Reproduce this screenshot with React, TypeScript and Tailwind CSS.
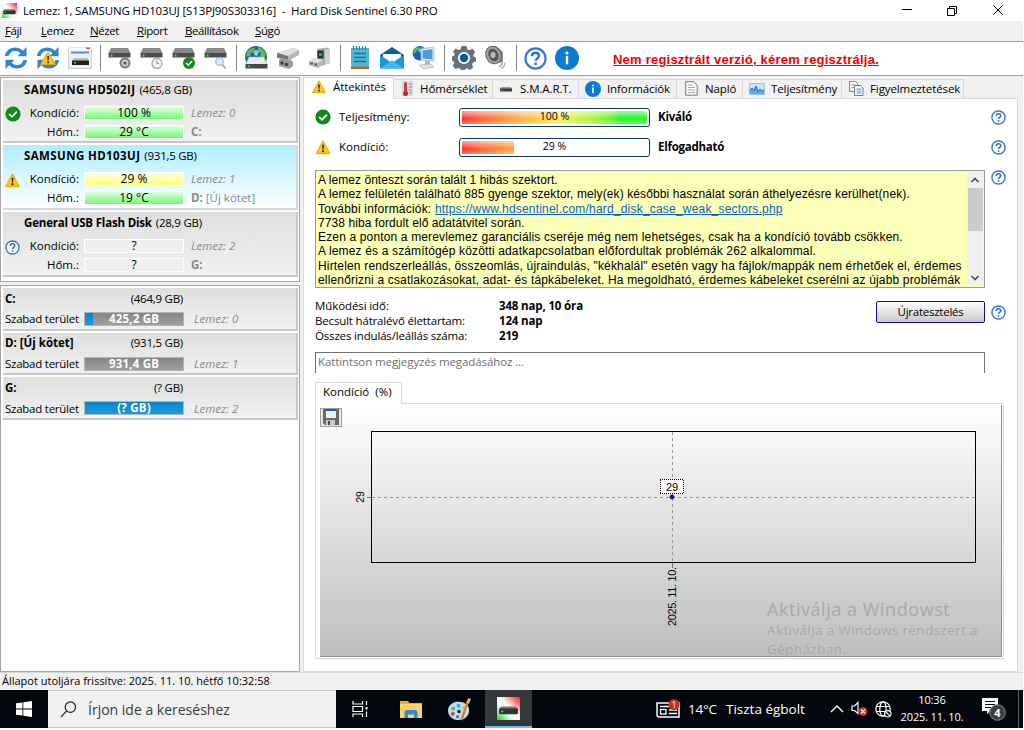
import type { ReactNode } from "react";
import { clsx } from "clsx";

type Disk = {
  name: string;
  size: string;
  status: "ok" | "warn" | "unknown";
  condition: string;
  temp: string;
  index: string;
  drive: string;
  label?: string;
  selected?: boolean;
  className: string;
  track: string;
};

const disks: Disk[] = [
  { name: "SAMSUNG HD502IJ", size: "(465,8 GB)", status: "ok", condition: "100 %", temp: "29 °C", index: "Lemez: 0", drive: "C:", className: "h-[63px] pt-px", track: "tracking-[0.4px]" },
  { name: "SAMSUNG HD103UJ", size: "(931,5 GB)", status: "warn", condition: "29 %", temp: "19 °C", index: "Lemez: 1", drive: "D:", label: "[Új kötet]", selected: true, className: "h-[65px] pt-[2px]", track: "tracking-[0.4px]" },
  { name: "General USB Flash Disk", size: "(28,9 GB)", status: "unknown", condition: "?", temp: "?", index: "Lemez: 2", drive: "G:", className: "h-[65px] pt-[2px]", track: "tracking-[-0.18px]" },
];

const volumes = [
  { name: "C:", size: "(464,9 GB)", free: "425,2 GB", used: 8, index: "Lemez: 0" },
  { name: "D: [Új kötet]", size: "(931,5 GB)", free: "931,4 GB", used: 0, index: "Lemez: 1" },
  { name: "G:", size: "(? GB)", free: "(? GB)", used: 100, index: "Lemez: 2" },
];

const messages = [
  { text: "A lemez önteszt során talált 1 hibás szektort.", track: "tracking-[0.05px]" },
  { text: "A lemez felületén található 885 gyenge szektor, mely(ek) későbbi használat során áthelyezésre kerülhet(nek).", track: "tracking-[0.1px]" },
  { text: "További információk: ", link: "https://www.hdsentinel.com/hard_disk_case_weak_sectors.php", track: "tracking-[0.2px]" },
  { text: "7738 hiba fordult elő adatátvitel során.", track: "tracking-[0.08px]" },
  { text: "Ezen a ponton a merevlemez garanciális cseréje még nem lehetséges, csak ha a kondíció tovább csökken.", track: "tracking-[0.15px]" },
  { text: "A lemez és a számítógép közötti adatkapcsolatban előfordultak problémák 262 alkalommal.", track: "tracking-[0.15px]" },
  { text: "Hirtelen rendszerleállás, összeomlás, újraindulás, \"kékhalál\" esetén vagy ha fájlok/mappák nem érhetőek el, érdemes", track: "tracking-[0.17px]" },
  { text: "ellenőrizni a csatlakozásokat, adat- és tápkábeleket. Ha megoldható, érdemes kábeleket cserélni az újabb problémák", track: "tracking-[0.17px]" },
];

function Warn({ className }: { className?: string }) {
  return (
    <svg viewBox="0 0 16 16" className={clsx("shrink-0", className)}>
      <path d="M8 1.2 15.2 14.4H.8Z" fill="#ffc91f" stroke="#f0b400" strokeWidth="1.4" strokeLinejoin="round" />
      <path d="M7 5h2l-.4 5H7.400Z" fill="#222" />
      <rect x="7" y="11" width="2" height="2" fill="#222" />
    </svg>
  );
}

function Ok({ className }: { className?: string }) {
  return (
    <svg viewBox="0 0 16 16" className={clsx("shrink-0", className)}>
      <circle cx="8" cy="8" r="7.600" fill="#10881a" />
      <path d="m4.200 8.200 2.800 2.700 4.900-5.200" fill="none" stroke="#fff" strokeWidth="1.7" />
    </svg>
  );
}

function Help({ className }: { className?: string }) {
  return (
    <svg viewBox="0 0 16 16" className={clsx("shrink-0", className)}>
      <circle cx="8" cy="8" r="7" fill="#fff" stroke="#3a78d0" strokeWidth="1.5" />
      <path d="M5.600 6.300C5.700 4.700 6.700 4 8 4s2.400.8 2.400 2.100c0 1.700-2.300 1.800-2.300 3.500" fill="none" stroke="#2f6fca" strokeWidth="1.6" />
      <rect x="7.200" y="10.800" width="1.700" height="1.700" fill="#2f6fca" />
    </svg>
  );
}

function Info({ className }: { className?: string }) {
  return (
    <svg viewBox="0 0 16 16" className={clsx("shrink-0", className)}>
      <circle cx="8" cy="8" r="8" fill="#0a7bd0" />
      <circle cx="8" cy="4.600" r="1" fill="#fff" />
      <rect x="7.200" y="6.600" width="1.600" height="5.600" fill="#fff" />
    </svg>
  );
}

function AppIcon({ className }: { className?: string }) {
  return (
    <svg viewBox="0 0 22 22" className={clsx("shrink-0", className)}>
      <defs>
        <linearGradient id="app-bg" x1="0" y1="1" x2="1" y2="0">
          <stop offset="0" stopColor="#19d02c" />
          <stop offset=".35" stopColor="#e9fbe9" />
          <stop offset=".55" stopColor="#fff" />
          <stop offset="1" stopColor="#ff1818" />
        </linearGradient>
      </defs>
      <rect width="22" height="22" fill="url(#app-bg)" />
      <path d="M4 9h14l2 2.500H2Z" fill="#777" />
      <rect x="2" y="11" width="18" height="5.500" rx="1" fill="#333" />
      <rect x="4" y="13" width="2" height="1.500" fill="#3be04a" />
    </svg>
  );
}

function RefreshShape() {
  return (
    <g fill="#2d86d3">
      <path d="M1 10C1.500 5 6 1.500 11 1.500c3.500 0 6 1.300 7.800 3.300L22.500 1v9.200h-9l3-3C15 5.800 13.300 5 11 5c-3.400 0-5.700 2-6.500 5Z" />
      <path d="M23 14c-.5 5-5 8.500-10 8.500-3.500 0-6-1.300-7.800-3.300L1.500 23v-9.200h9l-3 3C9 18.200 10.700 19 13 19c3.400 0 5.700-2 6.500-5Z" />
    </g>
  );
}

function DriveShape() {
  return (
    <g>
      <path d="M3 2h17l2.500 5H.5Z" fill="#8a8a8a" />
      <rect x=".5" y="7" width="22" height="4.500" fill="#4d4d4d" />
      <rect x="2.500" y="8.500" width="2" height="2" fill="#35e043" />
    </g>
  );
}

function GlobeShape() {
  return (
    <g>
      <circle cx="12" cy="11" r="11" fill="#1b62bd" />
      <path d="M3 6c3-4 6-4.500 8-4l-1 4-3 1-1 3-4 1ZM14 1c4 1 7 4 8 8l-3 4-3-3 1-3-3-2Z" fill="#62bd48" />
      <path d="M10 5c2-2 4-1 5 1l-2 4-3-1Z" fill="#7ccbf5" />
    </g>
  );
}

function Tool({ children }: { children: ReactNode }) {
  return (
    <button className="flex h-8 w-8 items-center justify-center">
      <svg viewBox="0 0 24 24" className="h-6 w-6">{children}</svg>
    </button>
  );
}

function Separator() {
  return (
    <div className="flex w-2 justify-center">
      <div className="h-[26px] w-px bg-[#868686]" />
    </div>
  );
}

function Toolbar() {
  return (
    <div className="flex h-[34px] items-center border-b border-[#a0a0a0] bg-white pb-px">
      <Tool><RefreshShape /></Tool>
      <Tool>
        <RefreshShape />
        <path d="m12 6 7.500 12.500h-15Z" fill="#ffc414" stroke="#e6a400" strokeLinejoin="round" />
        <path d="M11.200 10h1.800l-.4 4.500h-1Z" fill="#222" />
        <rect x="11.200" y="15.500" width="1.800" height="1.600" fill="#222" />
      </Tool>
      <Tool>
        <rect x=".5" y="2" width="23" height="20.500" fill="#eef0f2" stroke="#ccd0d4" />
        <rect x="1" y="2" width="22" height="1.500" fill="#fff" />
        <rect x="18" y="1.500" width="4" height="1.500" fill="#dd4b3d" />
        <rect x="3" y="5.500" width="18" height="2" fill="#3d9be0" />
        <path d="M6 12h13l2 3H4Z" fill="#bbb" />
        <rect x="4" y="14.500" width="17" height="4.500" fill="#222" />
        <rect x="6" y="16" width="2" height="1.500" fill="#35e043" />
      </Tool>
      <Separator />
      <Tool>
        <DriveShape />
        <circle cx="17" cy="17" r="5.500" fill="#777b80" />
        <circle cx="17" cy="17" r="3.500" fill="#c7cacf" />
        <circle cx="17" cy="17" r="1.500" fill="#555" />
      </Tool>
      <Tool>
        <DriveShape />
        <circle cx="17" cy="17.500" r="5" fill="#f5f5f5" stroke="#aaa" strokeWidth="1.300" />
        <path d="M17 14.500v3h2" fill="none" stroke="#888" />
      </Tool>
      <Tool>
        <DriveShape />
        <circle cx="17" cy="17" r="6" fill="#12891b" />
        <path d="m14 17 2.300 2.200 3.700-4" fill="none" stroke="#fff" strokeWidth="1.500" />
      </Tool>
      <Tool>
        <DriveShape />
        <path d="m17.500 17.500 4 5" stroke="#b9a98f" strokeWidth="2" />
        <circle cx="15.500" cy="15.500" r="3.800" fill="#d6ecfb" stroke="#9db9cf" strokeWidth="1.200" />
      </Tool>
      <Separator />
      <Tool>
        <GlobeShape />
        <path d="M5 11h15l3.500 7.500H1.500Z" fill="#e8e9eb" stroke="#a8abb0" strokeWidth=".6" />
        <rect x="1.500" y="18" width="22" height="4.500" fill="#45474b" />
        <rect x="4" y="19.500" width="2" height="1.500" fill="#35e043" />
      </Tool>
      <Tool>
        <path d="M1 7 17 2l6 2v5l-9 5-13-2Z" fill="#b5b5b5" />
        <path d="m1 7 16-5 6 2-11 6Z" fill="#dedede" />
        <path d="m1 7 11 3v4L1 11.500Z" fill="#777" />
        <path d="m3 14 3-2 9 2 2 2v4l-4 3-10-3Z" fill="#9a9a9a" />
        <circle cx="6" cy="17" r="1.700" fill="#3a3a3a" />
        <circle cx="10.500" cy="18.500" r="1.700" fill="#3a3a3a" />
      </Tool>
      <Tool>
        <path d="M9 3 19 1.500l3 1.500v14l-9 3-4-2Z" fill="#a9aaab" />
        <path d="M17 3.500h5V17l-5 1.500Z" fill="#d0d0d0" />
        <rect x="9.500" y="4.500" width="6" height="8" fill="#2b332d" />
        <rect x="11" y="7.500" width="3" height="2" fill="#35e043" />
        <path d="m1 15 5-3 9 2v5l-5 3-9-3Z" fill="#b9b9b9" />
        <path d="m1 15 5-3 9 2-5 3Z" fill="#e0e0e0" />
        <rect x="2.500" y="16.500" width="2.500" height="2" fill="#555" />
        <rect x="6.500" y="17.500" width="2.500" height="2" fill="#555" />
      </Tool>
      <Separator />
      <Tool>
        <rect x="3" y="2" width="18" height="20" fill="#4fb8d6" />
        <rect x="3" y="20.500" width="18" height="2.500" fill="#b4652b" />
        <path d="M5.500 0v4M8.500 0v4M11.500 0v4M14.500 0v4M17.500 0v4" stroke="#277d9b" strokeWidth="1.200" />
        <path d="M6 7.500h12M6 11.500h12M6 15.500h12" stroke="#1c7291" strokeWidth="1.500" />
      </Tool>
      <Tool>
        <path d="M0 9 12 1l12 8v13H0Z" fill="#115a9c" />
        <path d="M3 8h18v8H3Z" fill="#f6f9fb" />
        <path d="m0 9 12 8 12-8v13.500H0Z" fill="#1b96dd" />
        <path d="m0 22.500 12-8 12 8Z" fill="#42b4ef" />
      </Tool>
      <Tool>
        <g transform="scale(.66)"><GlobeShape /></g>
        <path d="m9 3 13-2v14L9 14Z" fill="#eaf0f5" stroke="#9eabb8" strokeWidth=".7" />
        <path d="m10.500 4.500 10-1.500v10.500l-10-1Z" fill="#4a9be8" />
        <path d="m13 15 5 .3v4H13Z" fill="#a8b4c2" />
        <path d="m7 19 12-1 3 3-11 2Z" fill="#dfe4e9" stroke="#9eabb8" strokeWidth=".6" />
      </Tool>
      <Separator />
      <Tool>
        <path
          fillRule="evenodd"
          d="M9.500 0h5l.8 3.300 2 .9L20.500 2.500 23 6.200l-1.700 2.700.5 1.800 2.200.8v4l-3 1-.9 1.900 1.100 3-3.200 2.500-2.800-1.700-1.500.5-.8 1.300h-3.800l-1-1.500-1.800-.6L3.500 23 .8 20l1.400-3-.7-1.700L0 14.500v-4l2-.8.7-2L1 5.500 3.600 2.500l3 1.500 2-.8ZM12 6a6 6 0 1 0 0 12 6 6 0 0 0 0-12Z"
          fill="#67727f"
        />
        <circle cx="12" cy="12" r="4.200" fill="#0b56a7" />
      </Tool>
      <Tool>
        <path d="M5 2 12 0l7 6v10l-4 1Z" fill="#8b8d8f" />
        <ellipse cx="9.500" cy="9" rx="7.500" ry="9" fill="#a3a5a7" stroke="#5e6062" transform="rotate(-25 9.500 9)" />
        <ellipse cx="9.500" cy="9" rx="5" ry="6.500" fill="#55575a" transform="rotate(-25 9.500 9)" />
        <ellipse cx="9" cy="9" rx="2.500" ry="3" fill="#b8babc" />
        <path d="M15 20.500c2-.5 3-2 3.500-4M17 22.500c2.500-1 4-3 4-6" fill="none" stroke="#a7a9cc" strokeWidth="1.300" />
      </Tool>
      <Separator />
      <button className="-ml-px flex h-8 w-8 items-center justify-center"><Help className="h-[23px] w-[23px]" /></button>
      <button className="flex h-8 w-8 items-center justify-center"><Info className="h-6 w-6" /></button>
      <a className="mt-1 ml-[30px] font-['Liberation_Sans'] text-[13px] font-bold tracking-[0.22px] whitespace-nowrap text-[#f00000] underline">
        Nem regisztrált verzió, kérem regisztrálja.
      </a>
    </div>
  );
}

function Meter({ value, tone }: { value: string; tone: "good" | "warn" | "none" }) {
  return (
    <div
      className={clsx(
        "flex h-[14px] w-[100px] items-center justify-center border border-white text-[12px] leading-none",
        tone === "good" && "bg-linear-to-b from-[#dcffdc] to-[#72f872]",
        tone === "warn" && "bg-linear-to-b from-[#ffffe0] to-[#ffff72]",
        tone === "none" && "bg-[#efefef]"
      )}
    >
      {value}
    </div>
  );
}

function DiskCard({ disk }: { disk: Disk }) {
  const known = disk.status !== "unknown";
  return (
    <div
      className={clsx(
        "flex flex-col border-r-2 border-b-2 bg-linear-to-b",
        disk.selected ? "border-[#d3dadd] from-[#aeeefe] to-white" : "border-[#c8c8c8] from-[#dedede] to-[#f1f1f1]",
        disk.className
      )}
    >
      <div className="flex h-[18px] items-center gap-1 pl-[21px] whitespace-nowrap">
        <b className={disk.track}>{disk.name}</b>
        <span className="tracking-[-0.25px]">{disk.size}</span>
      </div>
      <div className="mt-[7px] flex items-start">
        <div className="flex w-5 items-center pl-[2px]">
          {disk.status === "ok" && <Ok className="h-4 w-4" />}
          {disk.status === "warn" && <Warn className="mt-px h-[15px] w-[15px]" />}
          {disk.status === "unknown" && <Help className="mt-px h-[15px] w-[15px]" />}
        </div>
        <div className="flex flex-col gap-[5px]">
          <div className="flex h-[14px] items-center whitespace-nowrap">
            <span className="w-[56px] text-right">Kondíció:</span>
            <div className="ml-[5px]"><Meter value={disk.condition} tone={known ? (disk.status === "warn" ? "warn" : "good") : "none"} /></div>
            <i className="ml-[7px] text-[#8a8a8a]">{disk.index}</i>
          </div>
          <div className="flex h-[14px] items-center whitespace-nowrap">
            <span className="w-[56px] text-right">Hőm.:</span>
            <div className="ml-[5px]"><Meter value={disk.temp} tone={known ? "good" : "none"} /></div>
            <span className="ml-[7px] text-[#8a8a8a]"><b>{disk.drive}</b> {disk.label}</span>
          </div>
        </div>
      </div>
    </div>
  );
}

function Sidebar() {
  return (
    <div className="flex w-[300px] flex-col gap-[3px]">
      <div className="flex h-[205px] flex-col gap-[2px] border border-[#a5a5a5] bg-white pt-[2px] pr-px pl-[2px]">
        {disks.map((disk) => (
          <DiskCard key={disk.name} disk={disk} />
        ))}
      </div>
      <div className="flex flex-1 flex-col gap-[2px] border border-[#a5a5a5] bg-white pt-[2px] pr-px pl-[2px]">
        {volumes.map((volume) => (
          <div key={volume.name} className="flex h-[42.600px] flex-col border-r-2 border-b-2 border-[#c8c8c8] bg-linear-to-b from-[#dedede] to-[#f1f1f1] pl-[2px]">
            <div className="flex h-[21px] w-[178px] items-center justify-between whitespace-nowrap">
              <b>{volume.name}</b>
              <span className="tracking-[-0.25px]">{volume.size}</span>
            </div>
            <div className="mt-px flex h-[18px] items-center whitespace-nowrap">
              <span className="w-[79px] tracking-[-0.25px]">Szabad terület</span>
              <div className="relative flex h-[14px] w-[100px] items-center justify-center border border-[#b4b4b4] bg-linear-to-b from-[#858585] to-[#a0a0a0]">
                <div className="absolute inset-y-0 left-0 bg-linear-to-b from-[#0b83c4] to-[#1e9bdc]" style={{ width: `${volume.used}%` }} />
                <b className="relative leading-none tracking-[0.2px] text-white">{volume.free}</b>
              </div>
              <i className="ml-[10px] text-[#8a8a8a]">{volume.index}</i>
            </div>
          </div>
        ))}
      </div>
    </div>
  );
}

function Tab({ icon, label, className }: { icon: ReactNode; label: string; className: string }) {
  return (
    <div className={clsx("flex h-[19px] items-center border-t border-r border-[#dadada] bg-[#f1f1f1] pb-px tracking-[-0.1px] whitespace-nowrap", className)}>
      <span className="flex w-[18px] shrink-0 items-center justify-center">{icon}</span>
      {label}
    </div>
  );
}

function Tabs() {
  return (
    <div className="flex h-[21px] items-end">
      <div className="relative z-10 -mb-px flex h-[22px] w-[91px] items-center border border-b-0 border-[#dadada] bg-white pb-[3px] pl-[8px] tracking-[-0.1px] whitespace-nowrap">
        <Warn className="h-[14px] w-[14px]" />
        <span className="ml-[7px]">Áttekintés</span>
      </div>
      <Tab
        className="w-[99px] gap-[8px]"
        label="Hőmérséklet"
        icon={
          <svg viewBox="0 0 16 16" className="ml-[8px] h-4 w-4 shrink-0">
            <rect x="3" y="0" width="11" height="15" fill="#d7dde5" />
            <path d="M10 3h3M10 6h3M10 9h3M10 12h3" stroke="#7c8996" />
            <rect x="5" y="1" width="3" height="10" rx="1.500" fill="#d33a2c" />
            <circle cx="6.500" cy="12.500" r="2.500" fill="#c9241b" />
          </svg>
        }
      />
      <Tab
        className="w-[86px] gap-[5px] pl-[4px]"
        label="S.M.A.R.T."
        icon={
          <svg viewBox="0 0 14 14" className="h-[14px] w-[14px]">
            <path d="M2 5h10l1 2H1Z" fill="#999" />
            <rect x="1" y="6.500" width="12" height="3" fill="#3c3c3c" />
            <rect x="2.500" y="7.500" width="1" height="1" fill="#35e043" />
          </svg>
        }
      />
      <Tab className="w-[98px] gap-[5px] pl-[5px]" label="Információk" icon={<Info className="h-4 w-4" />} />
      <Tab
        className="w-[66px] gap-[5px] pl-[5px]"
        label="Napló"
        icon={
          <svg viewBox="0 0 13 15" className="h-[15px] w-[13px]">
            <path d="M.7.700h8l3.500 3.500v10H.7Z" fill="#fafafa" stroke="#777" />
            <path d="M3 4h4M3 6.500h7M3 9h7M3 11.500h7" stroke="#aaa" />
          </svg>
        }
      />
      <Tab
        className="w-[99px] gap-[5px] pl-[5px]"
        label="Teljesítmény"
        icon={
          <svg viewBox="0 0 16 12" className="h-3 w-4">
            <rect x=".5" y=".5" width="15" height="11" fill="#c4e4fa" stroke="#9dc4e0" />
            <path d="m1 8 2-3 2 3 2-5 2 6 2-3 2 2 2-1v4H1Z" fill="#5fb0ea" />
            <path d="m1 8 2-3 2 3 2-5 2 6 2-3 2 2 2-1" fill="none" stroke="#176fb8" />
          </svg>
        }
      />
      <Tab
        className="w-[122px] gap-[5px] pl-[5px]"
        label="Figyelmeztetések"
        icon={
          <svg viewBox="0 0 15 15" className="h-[15px] w-[15px]">
            <path d="M.5.500h6l2 2v8h-8Z" fill="#f4f4f4" stroke="#888" />
            <path d="M2.500 4h4M2.500 6.500h3" stroke="#999" />
            <path d="M5.500 4.500h6l2.500 2.500v7.500H5.500Z" fill="#fff" stroke="#777" />
            <path d="M7.500 8h5M7.500 10h5M7.500 12h5" stroke="#4590d8" />
          </svg>
        }
      />
    </div>
  );
}

function StatusRow({ icon, label, percent, fill, verdict }: { icon: ReactNode; label: string; percent: string; fill: number; verdict: string }) {
  return (
    <div className="flex h-5 items-center whitespace-nowrap">
      {icon}
      <span className="ml-2 w-[120px]">{label}</span>
      <div className="relative flex h-[19px] w-[191px] items-center justify-center rounded-[3px] border border-[#0b3765] bg-white p-px">
        <div className="absolute inset-x-[2px] inset-y-[2px]">
          <div className="h-full overflow-hidden" style={{ width: `${fill}%` }}>
            <div className="h-full w-[185px] bg-linear-to-r from-[#ff2a2a] via-[#ffee55] via-52% to-[#25f525] to-85%">
              <div className="h-full bg-linear-to-b from-white/60 via-transparent via-60% to-white/30" />
            </div>
          </div>
        </div>
        <span className="relative text-[10.500px]">{percent}</span>
      </div>
      <b className="ml-2 flex-1 tracking-[-0.25px]">{verdict}</b>
      <Help className="h-[15px] w-[15px]" />
    </div>
  );
}

function Chart() {
  return (
    <svg viewBox="320 405 682 251" className="h-[251px] w-[682px]" fontFamily="Liberation Sans, sans-serif" fontSize="11">
      <rect x="320.500" y="408.500" width="21" height="18" fill="#e6e6e6" stroke="#a0a0a0" />
      <path d="M323 409h16v16h-14l-2-2Z" fill="#686868" />
      <rect x="326" y="409" width="10" height="2" fill="#1560a8" />
      <rect x="326" y="411" width="10" height="7" fill="#f0f0f0" />
      <rect x="326" y="420" width="9" height="5" fill="#c8c8c8" />
      <rect x="328" y="421" width="2" height="4" fill="#444" />
      <rect x="371.500" y="431.500" width="604" height="131" fill="none" stroke="#000" />
      <path d="M372 497.500h604M672.500 432v131" stroke="#979797" strokeDasharray="3 3" />
      <path d="M367 497.500h4M672.500 563v5" stroke="#707070" />
      <rect x="660" y="479" width="24" height="15" fill="#fff" />
      <path d="M660 479.500h24M660 493.500h24M660.500 480v14M683.500 480v14" stroke="#000" strokeDasharray="1 1" shapeRendering="crispEdges" />
      <text x="672" y="490.500" textAnchor="middle">29</text>
      <circle cx="672" cy="497" r="2" fill="#0000d0" stroke="#000" strokeWidth=".7" />
      <text transform="translate(364 497) rotate(-90)" textAnchor="middle" fontSize="10.500">29</text>
      <text transform="translate(676 626) rotate(-90)" textLength="59">2025. 11. 10.</text>
    </svg>
  );
}

function Overview() {
  return (
    <div className="relative flex flex-1 flex-col border border-[#dadada] bg-white pt-[8px] pl-[11px]">
      <div className="flex w-[691px] flex-col gap-[10px]">
        <StatusRow icon={<Ok className="h-4 w-4" />} label="Teljesítmény:" percent="100 %" fill={100} verdict="Kiváló" />
        <StatusRow icon={<Warn className="h-[15px] w-4" />} label="Kondíció:" percent="29 %" fill={28} verdict="Elfogadható" />
      </div>

      <div className="mt-[13px] flex w-[691px] items-start justify-between">
        <div className="flex h-[118px] w-[670px] border border-[#9a9a9a] bg-[#fbffb8] p-px">
          <div className="flex-1 pt-px pl-px font-['Liberation_Sans'] text-[12px] leading-[14.300px] whitespace-nowrap">
            {messages.map((m) => (
              <div key={m.text} className={m.track}>
                {m.text}
                {m.link && <a className="text-[#0a63c2] underline">{m.link}</a>}
              </div>
            ))}
          </div>
          <div className="flex w-4 flex-col items-center bg-[#f0f0f0]">
            <svg viewBox="0 0 16 16" className="h-4 w-4"><path d="m4.500 10 3.500-3.500 3.500 3.500" fill="none" stroke="#505050" strokeWidth="1.700" /></svg>
            <div className="h-[43px] w-[15px] bg-[#cbcbcb]" />
            <svg viewBox="0 0 16 16" className="mt-auto h-4 w-4"><path d="m4.500 6 3.500 3.500 3.500-3.500" fill="none" stroke="#505050" strokeWidth="1.700" /></svg>
          </div>
        </div>
        <Help className="h-[15px] w-[15px]" />
      </div>

      <div className="mt-[10px] flex h-[54px] w-[691px] items-start whitespace-nowrap">
        <div className="w-[184px] leading-[15.200px]">
          <p className="tracking-[-0.1px]">Működési idő:</p>
          <p className="tracking-[-0.17px]">Becsult hátralévő élettartam:</p>
          <p className="tracking-[-0.17px]">Összes indulás/leállás száma:</p>
        </div>
        <div className="flex-1 leading-[15.200px] font-bold tracking-[-0.15px]">
          <p>348 nap, 10 óra</p>
          <p>124 nap</p>
          <p>219</p>
        </div>
        <div className="mt-[3px] flex items-center gap-[6px]">
          <button className="h-[22px] w-[109px] rounded-[2px] border border-[#10107c] bg-linear-to-b from-white to-[#c9c9c9] tracking-[-0.25px]">Újratesztelés</button>
          <Help className="h-[15px] w-[15px]" />
        </div>
      </div>

      <div className="h-[21px] w-[670px] border border-b-0 border-[#6f6f6f] pl-[2px] leading-[18px] tracking-[-0.1px] text-[#707070]">Kattintson megjegyzés megadásához ...</div>

      <div className="relative z-10 mt-[9px] -mb-px flex h-[22px] w-[87px] items-center border border-b-0 border-[#dadada] bg-white pb-[3px] pl-[7px] whitespace-pre">
        {"Kondíció  (%)"}
      </div>
      <div className="h-[256px] w-[689px] border border-[#dadada] pt-px pl-[4px]">
        <div className="h-[252px] w-[682px] border-r border-b border-[#909090] bg-linear-to-b from-white via-[#e2e2e2] via-45% to-[#bebebe]">
          <Chart />
        </div>
      </div>

      {/* activation watermark floats over the chart */}
      <div className="absolute top-[499px] left-[463px] whitespace-nowrap text-[#a8a8a8]">
        <p className="text-[18px] leading-[22px] tracking-[0.55px]">Aktiválja a Windowst</p>
        <p className="mt-px text-[13.500px] leading-[19px] tracking-[0.38px]">Aktiválja a Windows rendszert a<br />Gépházban.</p>
      </div>
    </div>
  );
}

function Taskbar() {
  return (
    <div className="flex h-[38px] items-center bg-[#01070c] text-white">
      <div className="flex w-12 items-center justify-center">
        <svg viewBox="0 0 16 16" className="h-4 w-4" fill="#fff">
          <path d="M0 2.300 6.500 1.400v6.200H0ZM7.300 1.300 16 0v7.600H7.300ZM0 8.400h6.500v6.200L0 13.700ZM7.300 8.400H16V16l-8.700-1.300Z" />
        </svg>
      </div>
      <div className="flex h-full w-[288px] items-center border-y border-[#c8c8c8] bg-[#f1f1f1] pl-3 text-[#3b3b3b]">
        <svg viewBox="0 0 18 18" className="h-[17px] w-[17px]" fill="none" stroke="#222" strokeWidth="1.300">
          <circle cx="11" cy="6.500" r="5.500" />
          <path d="m7 10.500-6 6.500" />
        </svg>
        <span className="ml-[11px] text-[14px]">Írjon ide a kereséshez</span>
      </div>
      <div className="flex h-full w-[48px] items-center justify-center">
        <svg viewBox="0 0 16 16" className="h-4 w-4" fill="none" stroke="#fff" strokeWidth="1.200">
          <path d="M1 0v3h9.500V0M1 16v-3h9.500v3M1 5.500h9.500v5H1ZM14.500 0v4M14.500 10.500V16" />
          <rect x="13.500" y="6" width="2" height="2.500" fill="#fff" stroke="none" />
        </svg>
      </div>
      <div className="flex h-full w-[53px] items-center justify-center">
        <svg viewBox="0 0 22 18" className="h-[18px] w-[22px]">
          <path d="M0 1h8l1.500 2H22v15H0Z" fill="#f3ac26" />
          <rect y="4" width="22" height="14" fill="#ffd35e" />
          <path d="M4.500 18v-6.500L6 10h10l1.500 1.500V18H14v-3.500H8V18Z" fill="#2e8bdc" />
        </svg>
      </div>
      <div className="flex h-full w-[48px] items-center justify-center pr-1">
        <svg viewBox="0 0 24 24" className="h-[23px] w-[23px]">
          <path d="M11 4c6 0 11 3 11 9 0 5-4 10-11 10C5 23 0 19 0 13c0-2 1-5 4-7 2-1.300 4-2 7-2Z" fill="#bfdff1" />
          <circle cx="11" cy="8" r="2" fill="#3ca6e0" />
          <circle cx="5.500" cy="11" r="2" fill="#57b648" />
          <circle cx="5" cy="16.500" r="2" fill="#d64136" />
          <circle cx="10" cy="19.500" r="1.800" fill="#3c7fd0" />
          <circle cx="16.500" cy="10" r="1.800" fill="#eec22e" />
          <circle cx="11.500" cy="14" r="1.800" fill="#10222e" />
          <path d="m21 3-7 20" stroke="#d98324" strokeWidth="2.500" />
          <path d="m19 5 2-5 3 1-2 5Z" fill="#d7b483" />
        </svg>
      </div>
      <div className="flex h-full w-[47px] items-center justify-center border-b-2 border-[#76b9ed] bg-[#34383b]">
        <AppIcon className="h-[23px] w-[23px]" />
      </div>

      <div className="ml-auto flex h-full items-center whitespace-nowrap">
        <svg viewBox="0 0 25 20" className="h-5 w-[25px]">
          <path d="M1 4h22v14H2.500L1 16.500Z" fill="none" stroke="#fff" strokeWidth="1.500" />
          <path d="M4 7.500h17M13 11h8M13 14.500h8" stroke="#fff" strokeWidth="1.500" />
          <rect x="4.500" y="10.500" width="5.500" height="4.500" fill="none" stroke="#fff" strokeWidth="1.300" />
          <circle cx="18" cy="5.500" r="5.500" fill="#cf2b20" />
          <text x="18" y="9" fill="#fff" fontSize="9" textAnchor="middle">1</text>
        </svg>
        <span className="ml-[7px] w-[38px] text-[13.500px] tracking-[-0.2px]">14°C</span>
        <span className="w-[104px] text-[13.500px]">Tiszta égbolt</span>
        <svg viewBox="0 0 14 8" className="h-2 w-[14px]"><path d="m1 7 6-6 6 6" fill="none" stroke="#fff" strokeWidth="1.300" /></svg>
        <svg viewBox="0 0 17 16" className="ml-[7px] h-4 w-[17px]">
          <path d="M1 5h2.500L7 1.500v11L3.500 9.500H1Z" fill="none" stroke="#fff" strokeWidth="1.200" />
          <circle cx="12" cy="10.500" r="4.500" fill="#d92626" />
          <path d="m10 8.500 4 4m0-4-4 4" stroke="#fff" strokeWidth="1.300" />
        </svg>
        <svg viewBox="0 0 17 17" className="ml-[7px] h-[17px] w-[17px]" fill="none" stroke="#fff" strokeWidth="1.200">
          <circle cx="8" cy="8" r="7.200" />
          <ellipse cx="8" cy="8" rx="3.200" ry="7.200" />
          <path d="M1 5.500h14M1 10.500h14" />
          <circle cx="12.800" cy="12.800" r="3.200" fill="#01070c" />
          <path d="m10.800 10.800 4 4" />
        </svg>
        <div className="ml-[8px] flex w-[64px] flex-col items-center pb-[3px] text-[11px] leading-[17px] tracking-[-0.15px]">
          <span>10:36</span>
          <span>2025. 11. 10.</span>
        </div>
        <svg viewBox="0 0 24 24" className="ml-[18px] h-6 w-6">
          <path d="M0 1h16v13H8l-3 3v-3H0Z" fill="#fff" />
          <path d="M3 4.500h10M3 7.500h10M3 10.500h7" stroke="#01070c" />
          <circle cx="15.500" cy="15.500" r="7.800" fill="#3a3d40" stroke="#8c8c8c" />
          <text x="15.500" y="19.500" fill="#fff" fontSize="11" fontWeight="bold" textAnchor="middle">4</text>
        </svg>
        <div className="ml-[12px] h-full w-px bg-[#5a5e62]" />
        <div className="w-1" />
      </div>
    </div>
  );
}

const menu = [
  { key: "F", rest: "ájl", className: "w-[36px]" },
  { key: "L", rest: "emez", className: "w-[49px]" },
  { key: "N", rest: "ézet", className: "w-[47px]" },
  { key: "R", rest: "iport", className: "w-[48px]" },
  { key: "B", rest: "eállítások", className: "w-[70px]" },
  { key: "S", rest: "úgó", className: "w-[40px]" },
];

export default function App() {
  return (
    <div className="flex h-[730px] w-[1024px] flex-col overflow-hidden bg-white pr-px font-['Open_Sans','Noto_Sans',sans-serif] text-[11.500px] text-black">
      <div className="flex h-[21px] items-center pl-[2px]">
        <AppIcon className="h-[15px] w-[15px]" />
        <span className="ml-[6px] tracking-[-0.14px] whitespace-pre">{"Lemez: 1, SAMSUNG HD103UJ [S13PJ90S303316]  -  Hard Disk Sentinel 6.30 PRO"}</span>
        <svg viewBox="0 0 104 12" className="mr-[20px] ml-auto h-3 w-[104px] -translate-y-px" fill="none" stroke="#000">
          <path d="M3 5.500h10M48.500 4.500h7v7h-7ZM50.500 4.500v-2h7v7h-2M94.500 1.500l9 9m0-9-9 9" />
        </svg>
      </div>
      <div className="flex h-[21px] items-center border-b border-[#a0a0a0] bg-[#f0f0f0] pl-[5px]">
        {menu.map((m) => (
          <span key={m.key} className={clsx("tracking-[-0.4px] whitespace-nowrap", m.className)}>
            <u>{m.key}</u>{m.rest}
          </span>
        ))}
      </div>
      <Toolbar />
      <div className="flex h-[596px] gap-[3px] bg-[#f0f0f0] pt-px">
        <Sidebar />
        <div className="flex w-[715px] flex-col">
          <Tabs />
          <Overview />
        </div>
      </div>
      <div className="flex h-[18px] items-center border-t border-[#d7d7d7] bg-[#f0f0f0] pl-[2px] text-[11px]">Állapot utoljára frissítve: 2025. 11. 10. hétfő 10:32:58</div>
      <Taskbar />
    </div>
  );
}
